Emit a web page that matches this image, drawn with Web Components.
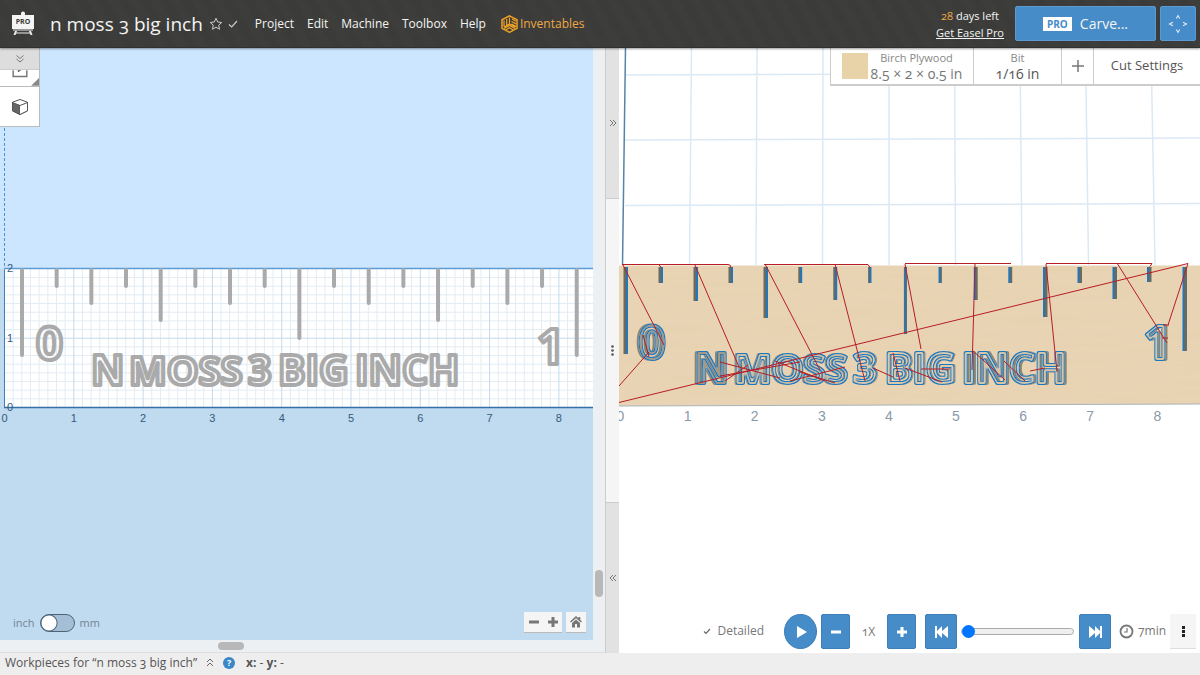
<!DOCTYPE html>
<html lang="en">
<head>
<meta charset="utf-8">
<title>n moss 3 big inch</title>
<style>
html, body { margin: 0; height: 100%; }
body { font-family: "Open Sans", "Noto Sans", sans-serif; font-variant-numeric: oldstyle-nums; background: #eee; color: #555; overflow: hidden; }
</style>
</head>
<body>
<easel-app></easel-app>
<script>
const reset = `
*, *::before, *::after { box-sizing: border-box; }
button { font: inherit; color: inherit; background: none; border: 0; padding: 0; margin: 0; display: inline-flex; align-items: center; justify-content: center; cursor: pointer; font-variant-numeric: inherit; }
a { color: inherit; }
svg { display: block; }
`;
function define(name, html, css) {
  customElements.define(name, class extends HTMLElement {
    constructor() {
      super();
      const template = document.createElement('template');
      template.innerHTML = `<style>${reset}${css}</style>${typeof html === 'function' ? html() : html}`;
      this.attachShadow({ mode: 'open' }).append(template.content.cloneNode(true));
    }
  });
}

/* ---------- header ---------- */
define('easel-header', `
<svg class="logo" width="24" height="26" viewBox="0 0 24 26" aria-hidden="true">
  <path d="M10 4V2.500a1.500 1.500 0 0 1 4 0V4zM1 4h22v14H1z" fill="#f4f4f4"/>
  <path d="M4 20h2l-1.500 4H2.500zM18 20h2l1.500 4h-2zM2 18.500h20v1H2zM4 21.500h16v1H4z" fill="#eee"/>
  <text x="12" y="13" text-anchor="middle" font-family="Open Sans, sans-serif" font-size="7" font-weight="700" fill="#3a3b38">PRO</text>
</svg>
<h1>n moss 3 big inch</h1>
<button aria-label="Favorite"><svg width="14" height="14" viewBox="0 0 14 14"><path d="M7 1.300 8.700 5l4 .5-3 2.700.8 4L7 10.200l-3.500 2 .8-4-3-2.700 4-.5z" fill="none" stroke="#ccc"/></svg></button>
<button class="saved" aria-label="Saved"><svg width="10" height="10" viewBox="0 0 10 10"><path d="M1 5.500 3.700 8 9 2" fill="none" stroke="#ccc" stroke-width="1.200"/></svg></button>
<nav><a href="#">Project</a><a href="#">Edit</a><a href="#">Machine</a><a href="#">Toolbox</a><a href="#">Help</a>
<a class="brand" href="#"><svg width="17" height="18" viewBox="0 0 17 18" fill="none" stroke="#eda127" stroke-width="1.200"><path d="M8.500.8 16 4.800v8.500l-7.500 4-7.500-4V4.800z" stroke-width="1.500"/><path d="M8.500 2.500V9L3 12M8.500 9l6 3.200M3 5.500v6M5.700 4v6M11 4l4 2.200M10.500 6.500l4.500 2.400M10.500 9l4.500 2.400M3 13.500l5.500-3 5.500 3M5 14.800l3.500-2 3.500 2"/></svg>Inventables</a></nav>
<div class="trial"><span><b>28</b> days left</span><a href="#">Get Easel Pro</a></div>
<button class="carve"><em>PRO</em>Carve...</button>
<button class="jog" aria-label="Jog machine"><svg width="20" height="20" viewBox="0 0 20 20" fill="none" stroke="#dceaf7" stroke-width="1.100"><path d="m8.300 4.500 1.700-3L11.700 4.500M8.300 15.500l1.700 3 1.700-3M5 8.300 1.500 10 5 11.700M15 8.300l3.500 1.700-3.500 1.700"/></svg></button>
`, `
:host { display: flex; align-items: center; height: 48px; padding: 0 4px 0 11px; color: #f4f4f4; position: relative; z-index: 2;
  background: repeating-linear-gradient(60deg, #3b3c39 0 9px, #3d3e3b 9px 18px); border-bottom: 1px solid #30312e; box-shadow: 0 1px 2px #0006; }
.logo { margin-right: 15px; }
h1 { margin: 0 6px 0 0; font-size: 19px; line-height: 28px; font-weight: 400; white-space: nowrap; }
.saved { margin-left: 5px; }
nav { display: flex; gap: 13px; margin-left: 17px; font-size: 12px; line-height: 20px; flex: 1; }
nav a { text-decoration: none; }
nav .brand { display: flex; align-items: center; gap: 2px; color: #eda845; margin-left: 2px; }
.trial { font-size: 11px; line-height: 17px; text-align: center; display: grid; margin-right: 11px; }
b { font-weight: 400; color: #eda845; }
.carve, .jog { height: 35px; background: #468cc8; border-radius: 2px; border: 1px solid #5a9bd3; }
.carve { width: 141px; margin-right: 4px; font-size: 14px; gap: 8px; }
.jog { width: 36px; }
em { font: 700 10px/14px "Open Sans", sans-serif; color: #468cc8; background: #fff; padding: 0 4px; }
`);

/* ---------- tool palette ---------- */
define('tool-palette', `
<button class="more" aria-label="Scroll tools"><svg width="10" height="10" viewBox="0 0 10 10" fill="none" stroke="#777"><path d="m1.500 1.500 3.500 3 3.500-3M1.500 5 5 8l3.500-3"/></svg></button>
<button class="import" aria-label="Import"><svg width="40" height="16" viewBox="0 0 40 16"><path d="M13.500 0v6.500h14V0" fill="none" stroke="#777" stroke-width="1.500"/><path d="M18 0h4l-3.500 2z" fill="#555"/><path d="M40 8v8h-8z" fill="#888"/></svg></button>
<button class="box" aria-label="Apps"><svg width="18" height="18" viewBox="0 0 18 18" stroke="#555" stroke-linejoin="round"><path d="m9 1.500 7.500 2.700v8.600L9 16.500l-7.500-3.700V4.200z" fill="#fff"/><path d="M1.500 4.500 9 7.500v9l-7.500-3.700z" fill="#666"/><path d="m9 7.500 7.500-3v8.300L9 16.500" fill="#fff"/></svg></button>
`, `
:host { display: grid; width: 40px; background: #fff; border: solid #bbb; border-width: 0 1px 1px 0; }
.more { height: 22px; background: #ddd; border-bottom: 1px solid #ccc; }
.import { height: 17px; align-items: flex-start; border-bottom: 1px solid #bbb; overflow: hidden; }
.box { height: 39px; }
`);

/* ---------- design canvas ---------- */
const INCH = 69.3, X0 = 4.5, Y0 = 407.5;
function word(items, attrs) {
  return `<g ${attrs}>` + items.map(([t, x, y, s, f]) => `<text x="${x}" y="${y}" font-size="${s}"${f ? ` filter="url(#${f})"` : ''}>${t}</text>`).join('') + '</g>';
}
function designDrawing() {
  let minor = '', major = '', labels = '', ticks = '';
  for (let i = 0; i < 72; i++) { const x = X0 + i * INCH / 8; if (i % 8) minor += `M${x} 269V407`; else major += `M${x} 269V407`; }
  for (let i = 0; i < 16; i++) { const y = Y0 - i * INCH / 8; if (i % 8) minor += `M5 ${y}H700`; else major += `M5 ${y}H700`; }
  for (let i = 0; i < 9; i++) labels += `<text x="${X0 + i * INCH}" y="422" text-anchor="middle">${i}</text>`;
  for (let i = 0; i < 3; i++) labels += `<text x="7" y="${411 - i * INCH}">${i}</text>`;
  [355, 286, 303, 286, 320, 286, 303, 286, 338, 286, 303, 286, 320, 286, 303, 286, 355]
    .forEach((y, i) => ticks += `M${22 + i * 34.67} 270V${y}`);
  const letters = [['0', 36, 360, 47], ['N', 91, 385, 41], ['MOSS', 129, 385, 40], ['3', 248, 385, 41], ['BIG', 278, 385, 41], ['INCH', 355, 385, 41], ['1', 537, 364, 48]];
  return `<svg viewBox="0 48 593 592" preserveAspectRatio="xMinYMin slice" width="100%" height="100%" role="img" aria-label="Design">
  <path d="M0-400H2000V269H0z" fill="#cce6ff"/><path d="M0 269H2000V2000H0z" fill="#c0daf0"/>
  <path d="M4.500 269H2000V407H4.500z" fill="#fff"/>
  <path d="${minor}" stroke="#e3ecf3"/><path d="${major}" stroke="#c3daec"/>
  <path d="M4.500 48V269" stroke="#4a8fce" stroke-dasharray="3 2"/>
  <path d="M4.500 269.500V407" stroke="#3d7fb8"/><path d="M4 268.500H2000" stroke="#5b9bd3" stroke-width="1.500"/><path d="M4 407.500H2000" stroke="#356fa5" stroke-width="1.500"/>
  <path d="${ticks}" stroke="#aaa" stroke-width="4" stroke-linecap="round"/>
  ${word(letters, 'class="art"')}
  <g class="axis">${labels}</g></svg>`;
}
define('design-canvas', () => designDrawing() + `
<tool-palette></tool-palette>
<div class="bar">
  <span class="unit"><label for="unit">inch</label><input id="unit" type="checkbox" role="switch"><label for="unit">mm</label></span>
  <div class="zoom pair"><button aria-label="Zoom out"><svg width="12" height="12"><path d="M1 6h10" stroke="#777" stroke-width="3"/></svg></button><button aria-label="Zoom in"><svg width="12" height="12"><path d="M1 6h10M6 1v10" stroke="#777" stroke-width="3"/></svg></button></div>
  <div class="zoom"><button aria-label="Fit to view"><svg width="12" height="12" viewBox="0 0 12 12" fill="#777"><path d="M6 0 0 5.500l1 1L6 2.200l5 4.300 1-1-1.700-1.600V1H8.500v1.200z"/><path d="M2 7v4.500h3V8h2v3.500h3V7L6 3.500z"/></svg></button></div>
</div>`, `
:host { display: block; position: relative; overflow: hidden; background: #c0daf0; min-width: 0; min-height: 0; font-variant-numeric: lining-nums; }
svg[role=img] { position: absolute; inset: 0; }
.art { font-family: "Open Sans", sans-serif; font-weight: 700; fill: none; stroke: #aaa; stroke-width: 4; stroke-linejoin: round; }
.axis { font: 11px "Liberation Sans", sans-serif; fill: #34597d; }
tool-palette { position: absolute; top: 0; left: 0; }
.bar { position: absolute; inset: auto 7px 7px 13px; display: flex; gap: 4px; align-items: flex-end; }
.unit { display: flex; align-items: center; gap: 5px; margin-right: auto; font-size: 11px; line-height: 20px; color: #758390; }
input { appearance: none; width: 35px; height: 18px; margin: 0; border: 1px solid #4d6478; border-radius: 9px; background: radial-gradient(circle at 8px 8px, #fff 7px, #4d6478 8px, transparent 9px) #a4bfd5; }
.zoom { display: flex; background: #f5f5f5; height: 21px; border-bottom: 1px solid #bbb; }
.zoom button { width: 20px; height: 20px; }
.pair button { width: 19px; }
`);

/* ---------- splitter between the panels ---------- */
define('panel-splitter', `
<button aria-label="Expand design"><svg width="8" height="8" viewBox="0 0 8 8" fill="none" stroke="#777"><path d="m1 1 3 3-3 3M4 1l3 3-3 3"/></svg></button>
<svg class="grip" width="3" height="11" fill="#555"><circle cx="1.500" cy="1.500" r="1.300"/><circle cx="1.500" cy="5.500" r="1.300"/><circle cx="1.500" cy="9.500" r="1.300"/></svg>
<button aria-label="Expand preview"><svg width="8" height="8" viewBox="0 0 8 8" fill="none" stroke="#777"><path d="M4 1 1 4l3 3M7 1 4 4l3 3"/></svg></button>
`, `
:host { display: grid; grid-template-rows: 1fr 2fr 1fr; border-left: 1px solid #ccc; background: #f5f5f5; cursor: col-resize; }
button { background: #e2e2e2; border: solid #ccc; border-width: 0 0 1px; }
button:last-child { border-width: 1px 0 0; }
.grip { align-self: center; justify-self: center; }
`);

/* ---------- material bar ---------- */
define('material-bar', `
<button class="mat"><i></i><span><small>Birch Plywood</small><br>8.5 × 2 × 0.5 in</span></button>
<button class="bit"><span><small>Bit</small><br>1/16 in</span></button>
<button class="plus" aria-label="Add bit"><svg width="12" height="12"><path d="M0 6h12M6 0v12" stroke="#777" stroke-width="1.500"/></svg></button>
<button class="cut">Cut Settings</button>
`, `
:host { display: flex; background: #fff; border: solid #ccc; border-width: 0 0 2px 1px; height: 38px; font-size: 14px; color: #555; }
button { border-right: 1px solid #ccc; }
button:last-child { border: 0; }
span { line-height: 16px; white-space: nowrap; padding-bottom: 2px; }
small { font-size: 11px; color: #888; }
i { width: 26px; height: 26px; background: #e8d2a8; }
.mat { width: 143px; gap: 3px; color: #777; }
.bit { width: 88px; } .plus { width: 32px; } .cut { width: 106px; font-size: 13px; padding-bottom: 2px; }
`);

/* ---------- playback controls ---------- */
define('playback-bar', `
<label class="detail"><svg width="8" height="8" viewBox="0 0 8 8"><path d="m1 4.500 2 2L7 2" fill="none" stroke="#666" stroke-width="1.200"/></svg>Detailed</label>
<button class="blue play" aria-label="Play"><svg width="10" height="12"><path d="M0 0v12l10-6z" fill="#fff"/></svg></button>
<button class="blue" aria-label="Slower"><svg width="10" height="12"><path d="M0 6h10" stroke="#fff" stroke-width="3"/></svg></button>
<span class="speed">1X</span>
<button class="blue" aria-label="Faster"><svg width="10" height="12"><path d="M0 6h10M5 1v10" stroke="#fff" stroke-width="3"/></svg></button>
<button class="blue skip" aria-label="To start"><svg width="13" height="12" viewBox="0 0 13 12"><path d="M0 0h2v5l5-5v5l6-5v12L7 7v5L2 7v5H0z" fill="#fff"/></svg></button>
<input type="range" min="0" max="100" value="0" aria-label="Simulation progress">
<button class="blue end" aria-label="To end"><svg width="13" height="12" viewBox="0 0 13 12"><path d="M13 0h-2v5L6 0v5L0 0v12l6-5v5l5-5v5h2z" fill="#fff"/></svg></button>
<svg class="clock" width="15" height="15" viewBox="0 0 15 15" fill="none" stroke="#777"><circle cx="7.500" cy="7.500" r="6" stroke-width="1.800"/><path d="M8 4v4H5" stroke-width="1.200"/></svg>
<span class="time">7min</span>
<button class="menu" aria-label="More"><svg width="3" height="11"><path d="M0 0h3v3H0zM0 4h3v3H0zM0 8h3v3H0z" fill="#222"/></svg></button>
`, `
:host { display: flex; align-items: center; height: 35px; font-size: 12px; line-height: 18px; color: #777; }
.detail { display: flex; align-items: center; gap: 6px; margin-right: 20px; padding-bottom: 2px; }
.blue { height: 35px; width: 29px; background: #468cc8; border-radius: 2px; border: 1px solid #3d7fba; }
.play { width: 33px; border-radius: 50%; margin-right: 4px; }
.play svg { margin-left: 2px; }
.speed { width: 37px; text-align: center; }
.skip { width: 32px; margin: 0 4px 0 9px; }
.end { width: 32px; margin: 0 8px 0 5px; }
input { appearance: none; width: 113px; height: 14px; margin: 0; background: none; }
input::-webkit-slider-runnable-track { height: 7px; border: 1px solid #aaa; border-radius: 4px; background: #efefef; }
input::-webkit-slider-thumb { appearance: none; width: 13px; height: 13px; margin-top: -4px; border-radius: 50%; background: #0075ff; }
.time { margin-left: 4px; width: 32px; padding-bottom: 2px; }
.menu { width: 26px; height: 35px; background: #f5f5f5; border-bottom: 1px solid #ddd; }
`);

/* ---------- 3D preview ---------- */
/* Turns a stroked letter into a groove: blue edges, a shaded floor and a dark side wall. */
function groove(id, dx, floor) {
  return `<filter id="${id}" x="-10%" y="-10%" width="120%" height="120%">
    <feMorphology in="SourceAlpha" operator="erode" radius="1" result="core"/>
    <feComposite in="SourceGraphic" in2="core" operator="out" result="edge"/>
    <feFlood flood-color="#6b6a5c" flood-opacity="${floor}"/><feComposite in2="core" operator="in" result="floor"/>
    <feOffset in="SourceAlpha" dx="${dx}" result="moved"/><feFlood flood-color="#6b6a5c" flood-opacity=".75"/><feComposite in2="moved" operator="in" result="wall"/>
    <feComposite in="wall" in2="SourceAlpha" operator="out" result="side"/>
    <feMerge><feMergeNode in="side"/><feMergeNode in="floor"/><feMergeNode in="edge"/></feMerge></filter>`;
}
function previewDrawing() {
  let grid = '', labels = '', light = '', dark = '';
  [691.5, 757, 823, 889, 954.5, 1020, 1085.5, 1151, 1216].forEach((x, i) => grid += `M${x} 48L${689.5 + i * 66.5} 265`);
  [75, 140, 205.500].forEach(y => grid += `M625 ${y}L1200 ${y - 2}`);
  for (let i = 0; i < 9; i++) labels += `<text x="${620.5 + i * 67.1}" y="421" text-anchor="middle">${i}</text>`;
  [[626, 354, 1], [661, 283, 1], [696, 301, 1], [731, 283, 1], [766, 318, 1], [800.5, 283, 0.7], [835.500, 300, 0.7], [870, 283, 0.4], [905.500, 334, 0.1],
   [940, 283, -0.4], [975.5, 300, -0.7], [1010, 283, -0.7], [1045, 317, -1], [1079.5, 283, -1], [1114.5, 299, -1], [1149, 282, -1], [1184.5, 351, -1]]
    .forEach(([x, y, d]) => { dark += `M${x - d} 267V${y}`; light += `M${x + d} 267V${y}`; });
  const letters = [['0', 639, 359, 46, 'gl'], ['N', 695, 383, 41, 'gl'], ['MOSS', 734, 383, 40, 'gm'], ['3', 853, 383, 41, 'gc'], ['BIG', 885, 383, 41, 'gc'], ['INCH', 962, 383, 41, 'gr'], ['1', 1144, 359, 47, 'gr']];
  return `<svg viewBox="619 48 581 605" preserveAspectRatio="xMinYMin slice" width="100%" height="100%" role="img" aria-label="Carve preview">
  <defs>${groove('gl', -2, .55)}${groove('gm', -1, .2)}${groove('gc', 1, .1)}${groove('gr', 2, .15)}
  <filter id="grain" x="0" y="0" width="100%" height="100%"><feTurbulence type="fractalNoise" baseFrequency=".012 .12" numOctaves="3" seed="4"/><feColorMatrix values="0 0 0 0 .78  0 0 0 0 .60  0 0 0 0 .40  .8 0 0 0 -.32"/></filter></defs>
  <path d="${grid}" stroke="#dbe9f5" stroke-width="1.500"/>
  <path d="M625.500 48 622.500 265" stroke="#5584ab" stroke-width="1.500"/>
  <path d="M619 265.500H1200V404L619 406z" fill="#e8d4b4"/>
  <path d="M619 266H1200V404H619z" filter="url(#grain)"/>
  <path d="M619 406 1200 404" stroke="#a9b3b8"/>
  <path d="${dark}" stroke="#6c6a5c" stroke-width="3"/><path d="${light}" stroke="#2376ba" stroke-width="2"/>
  ${word(letters, 'class="art"')}
  <g fill="none" stroke="#b81c24" stroke-width="1">
    <path d="M622 264.500H728q3 0 3 3M764 264.500H868l2 3M905 263.500H1011M1046 263.500H1152l-2 3M659 265l2 2"/>
    <path d="M623 265 664 345M643 335l6 22M649 352 619 386M619 402.500 1188 263.500 1168 325M695 265 739 367M765 264 820 370M835 264 865 381M905 264 921 349M975 264 972 370M1046 264 1057 372M1117 263 1167 343"/>
    <path d="M720 362 780 378M725 381 748 365M720 376 800 362M775 361 825 381M790 381 845 367M800 372 835 383M873 368 893 377M893 353 900 381M905 368 942 382M921 369H950M972 350 1005 380M1004 361 1025 381M1030 371 1045 368M1163 325h6M1162 338h6"/>
  </g>
  <g class="axis">${labels}</g></svg>`;
}
define('carve-preview', () => previewDrawing() + `<material-bar></material-bar><playback-bar></playback-bar>`, `
:host { display: block; position: relative; overflow: hidden; background: #fff; min-width: 0; min-height: 0; }
svg { position: absolute; inset: 0; }
.art { font-family: "Open Sans", sans-serif; font-weight: 700; font-variant-numeric: lining-nums; fill: none; stroke: #1f78bd; stroke-width: 4; stroke-linejoin: round; }
.axis { font: 14px "Liberation Sans", sans-serif; font-variant-numeric: lining-nums; fill: #8a99a8; }
material-bar { position: absolute; top: 0; right: 0; }
playback-bar { position: absolute; right: 4px; bottom: 4px; }
`);

/* ---------- status bar ---------- */
define('status-bar', `
<button>Workpieces for “n moss 3 big inch”<svg width="8" height="9" viewBox="0 0 8 9" fill="none" stroke="#666"><path d="m1 4 3-3 3 3M1 8l3-3 3 3"/></svg></button>
<button class="help" aria-label="Help">?</button>
<span><b>x:</b> - <b>y:</b> -</span>
`, `
:host { display: flex; align-items: center; height: 22px; padding: 0 5px 3px; background: #eee; font-size: 12px; line-height: 18px; color: #555; }
button { gap: 9px; }
.help { width: 12px; height: 12px; border-radius: 50%; background: #3a86c8; color: #fff; font: 700 9px/12px "Open Sans", sans-serif; margin: 0 11px 0 9px; }
b { font-weight: 700; }
`);

/* ---------- app ---------- */
define('easel-app', `
<easel-header></easel-header>
<main>
  <section><design-canvas></design-canvas><div class="v"><i></i></div><div class="h"><i></i></div></section>
  <panel-splitter></panel-splitter>
  <carve-preview></carve-preview>
</main>
<status-bar></status-bar>
`, `
:host { display: grid; grid-template-rows: auto 1fr auto; height: 100vh; }
main { display: grid; grid-template-columns: 605fr 14px 581fr; min-height: 0; }
section { display: grid; grid-template: 1fr 13px / 1fr 12px; min-width: 0; min-height: 0; background: #edf0f3; }
.v, .h { display: flex; }
.v { justify-content: center; align-items: flex-end; padding-bottom: 43px; }
.v i { width: 8px; height: 27px; border-radius: 4px; background: #b8b8b8; }
.h { grid-column: 1 / 3; border-bottom: 1px solid #ddd; align-items: center; padding-left: 36%; }
.h i { width: 26px; height: 8px; border-radius: 4px; background: #b8b8b8; }
`);
</script>
</body>
</html>
